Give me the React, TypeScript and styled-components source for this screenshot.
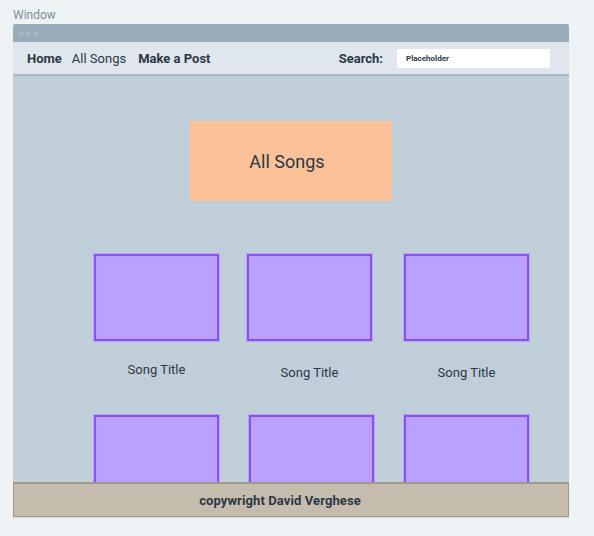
import React from "react";
import styled, { createGlobalStyle } from "styled-components";

const Global = createGlobalStyle`
  html, body { margin: 0; padding: 0; background: #eef3f6; }
  body { font-family: Roboto, "Liberation Sans", sans-serif; color: #2b3845; }
`;

const Page = styled.div`
  width: 594px;
  height: 536px;
  padding: 7px 0 0 13px;
  box-sizing: border-box;
  background: #eef3f6;
`;

const Label = styled.div`
  font-size: 12px;
  line-height: 17px;
  color: #7d8d9b;
`;

const Window = styled.div`
  width: 556px;
  display: flex;
  flex-direction: column;
  border-radius: 2px 2px 0 0;
  overflow: hidden;
  box-shadow: 0 1px 1px rgba(120, 140, 155, 0.25);
`;

const TitleBar = styled.div`
  height: 18px;
  flex-shrink: 0;
  background: #9aacb9;
  display: flex;
  align-items: center;
  gap: 2px;
  padding-left: 6px;
`;

const Dot = styled.span`
  width: 5px;
  height: 5px;
  border-radius: 50%;
  background: #aab8c3;
`;

const Nav = styled.nav`
  height: 32px;
  flex-shrink: 0;
  background: #dfe6ed;
  border-bottom: 2px solid #a9b9c6;
  display: flex;
  align-items: center;
  padding: 0 19px 0 14px;
  font-size: 13px;
`;

const NavLink = styled.span<{ $bold?: boolean; $gap?: number }>`
  font-weight: ${(p) => (p.$bold ? 700 : 400)};
  margin-right: ${(p) => p.$gap ?? 0}px;
  color: #2b3845;
`;

const Spacer = styled.div`
  flex: 1;
`;

const SearchLabel = styled.span`
  font-weight: 700;
  margin-right: 14px;
`;

const SearchBox = styled.div`
  width: 153px;
  height: 19px;
  background: #ffffff;
  display: flex;
  align-items: center;
  padding-left: 9px;
  box-sizing: border-box;
  font-size: 8px;
  font-weight: 700;
  color: #2b3845;
`;

const Content = styled.main`
  height: 406px;
  flex-shrink: 0;
  background: #c0ced9;
  overflow: hidden;
  display: flex;
  flex-direction: column;
  align-items: center;
  padding-top: 45px;
  box-sizing: border-box;
`;

const Hero = styled.div`
  width: 202px;
  height: 80px;
  flex-shrink: 0;
  box-sizing: border-box;
  padding-right: 8px;
  background: #fbc299;
  display: flex;
  align-items: center;
  justify-content: center;
  font-size: 18px;
  color: #2b3845;
`;

const Grid = styled.div`
  align-self: flex-start;
  flex-shrink: 0;
  margin: 53px 0 0 81px;
  display: grid;
  grid-template-columns: repeat(3, 125px);
  column-gap: 30px;
  row-gap: 34px;
`;

const Song = styled.div<{ $dx?: number }>`
  display: flex;
  flex-direction: column;
  align-items: center;
  transform: translateX(${(p) => p.$dx ?? 0}px);
`;

const Thumb = styled.div`
  width: 125px;
  height: 87px;
  box-sizing: border-box;
  background: #b9a1fd;
  border: 2px solid #8b4efd;
  box-shadow: 0 0 0 1px rgba(160, 130, 250, 0.45);
`;

const SongTitle = styled.div<{ $dy?: number }>`
  margin-top: ${(p) => 22 + (p.$dy ?? 0)}px;
  font-size: 13px;
  line-height: 17px;
  color: #2b3845;
`;

const Footer = styled.footer`
  height: 35px;
  flex-shrink: 0;
  box-sizing: border-box;
  background: #c5bcad;
  border: 1px solid #a2978a;
  border-top-width: 2px;
  display: flex;
  align-items: center;
  justify-content: center;
  padding-right: 22px;
  font-size: 13px;
  letter-spacing: 0.1px;
  font-weight: 700;
  color: #2b3845;
`;

const songs = [
  { dx: 0, dy: -2, title: "Song Title" },
  { dx: -2, dy: 1, title: "Song Title" },
  { dx: 0, dy: 1, title: "Song Title" },
  { dx: 0, dy: 0 },
  { dx: 0, dy: 0 },
  { dx: 0, dy: 0 },
];

export default function App() {
  return (
    <>
      <Global />
      <Page>
        <Label>Window</Label>
        <Window>
          <TitleBar>
            <Dot />
            <Dot />
            <Dot />
          </TitleBar>
          <Nav>
            <NavLink $bold $gap={10}>Home</NavLink>
            <NavLink $gap={12}>All Songs</NavLink>
            <NavLink $bold>Make a Post</NavLink>
            <Spacer />
            <SearchLabel>Search:</SearchLabel>
            <SearchBox>Placeholder</SearchBox>
          </Nav>
          <Content>
            <Hero>All Songs</Hero>
            <Grid>
              {songs.map((s, i) => (
                <Song key={i} $dx={s.dx}>
                  <Thumb />
                  {s.title && <SongTitle $dy={s.dy}>{s.title}</SongTitle>}
                </Song>
              ))}
            </Grid>
          </Content>
          <Footer>copywright David Verghese</Footer>
        </Window>
      </Page>
    </>
  );
}
